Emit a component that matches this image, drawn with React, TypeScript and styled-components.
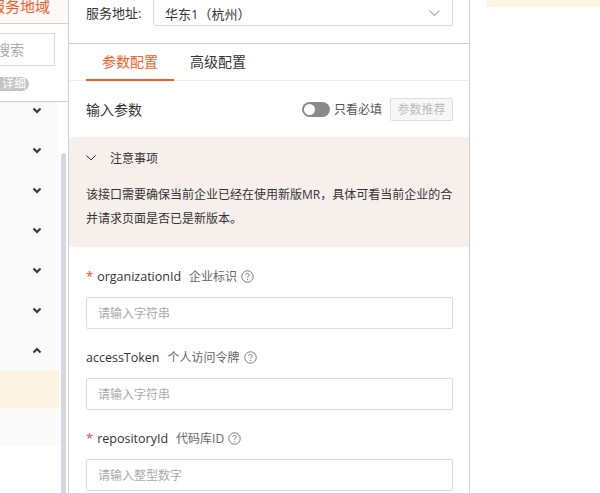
import React from "react";
import styled, { createGlobalStyle } from "styled-components";

const GlobalStyle = createGlobalStyle`
  html, body {
    margin: 0;
    padding: 0;
    width: 600px;
    height: 493px;
    overflow: hidden;
    background: #fff;
    font-family: "Open Sans", "Noto Sans CJK SC", sans-serif;
    color: #333;
  }
  * { box-sizing: border-box; }
`;

interface Field {
  name: string;
  desc: string;
  required: boolean;
  placeholder: string;
}

const fields: Field[] = [
  { name: "organizationId", desc: "企业标识", required: true, placeholder: "请输入字符串" },
  { name: "accessToken", desc: "个人访问令牌", required: false, placeholder: "请输入字符串" },
  { name: "repositoryId", desc: "代码库ID", required: true, placeholder: "请输入整型数字" },
];

const groups = [false, false, false, false, false, false, true];

const Chevron = ({ up }: { up?: boolean }) => (
  <svg width="10" height="7" viewBox="0 0 10 7">
    <path
      d={up ? "M1.5 5.5 L5 2 L8.5 5.5" : "M1.5 1.5 L5 5 L8.5 1.5"}
      fill="none"
      stroke="#333"
      strokeWidth="2"
    />
  </svg>
);

const ThinChevron = ({ color = "#333", size = 10 }: { color?: string; size?: number }) => (
  <svg width={size} height={size * 0.6} viewBox="0 0 10 6">
    <path d="M0.5 0.5 L5 5 L9.5 0.5" fill="none" stroke={color} strokeWidth="1" />
  </svg>
);

const HelpIcon = () => (
  <svg width="13" height="13" viewBox="0 0 12 12">
    <circle cx="6" cy="6" r="5.3" fill="none" stroke="#777" strokeWidth="0.9" />
    <path
      d="M4.4 4.6 C4.4 3.6 5.1 3.1 6 3.1 C6.9 3.1 7.6 3.7 7.6 4.5 C7.6 5.4 6.4 5.6 6.1 6.5 L6.1 7.1"
      fill="none"
      stroke="#777"
      strokeWidth="0.9"
    />
    <circle cx="6.1" cy="8.8" r="0.6" fill="#777" />
  </svg>
);

const App = () => {
  return (
    <>
      <GlobalStyle />
      <Page>
        <LeftPanel>
          <RegionHeader>
            <RegionTitle>服务地域</RegionTitle>
          </RegionHeader>
          <SearchArea>
            <SearchBox>请输入搜索</SearchBox>
            <DetailPill>详细</DetailPill>
          </SearchArea>
          <GroupList>
            <GroupInner>
              {groups.map((open, i) => (
                <GroupRow key={i}>
                  <Chevron up={open} />
                </GroupRow>
              ))}
              <GroupItem $active />
              <GroupItem />
            </GroupInner>
            <ScrollThumb />
          </GroupList>
        </LeftPanel>

        <MiddlePanel>
          <AddressRow>
            <AddressLabel>服务地址:</AddressLabel>
            <Select>
              <span>华东1（杭州）</span>
              <ThinChevron color="#aaa" size={11} />
            </Select>
          </AddressRow>

          <Tabs>
            <Tab $active>参数配置</Tab>
            <Tab>高级配置</Tab>
          </Tabs>

          <ParamsBar>
            <ParamsTitle>输入参数</ParamsTitle>
            <ParamsTools>
              <Toggle />
              <ToggleLabel>只看必填</ToggleLabel>
              <GhostButton disabled>参数推荐</GhostButton>
            </ParamsTools>
          </ParamsBar>

          <Notice>
            <NoticeHeader>
              <ThinChevron color="#333" size={10} />
              <span>注意事项</span>
            </NoticeHeader>
            <NoticeText>
              该接口需要确保当前企业已经在使用新版MR，具体可看当前企业的合
              <br />
              并请求页面是否已是新版本。
            </NoticeText>
          </Notice>

          <FieldList>
            {fields.map((f) => (
              <FieldBlock key={f.name}>
                <FieldLabel>
                  {f.required && <Star>*</Star>}
                  <FieldName>{f.name}</FieldName>
                  <FieldDesc>{f.desc}</FieldDesc>
                  <HelpIcon />
                </FieldLabel>
                <TextInput placeholder={f.placeholder} />
              </FieldBlock>
            ))}
          </FieldList>
        </MiddlePanel>

        <RightPanel>
          <TipStrip />
        </RightPanel>
      </Page>
    </>
  );
};

const Page = styled.div`
  display: flex;
  width: 600px;
  height: 493px;
  overflow: hidden;
`;

const LeftPanel = styled.div`
  width: 69px;
  flex-shrink: 0;
  height: 100%;
  border-right: 1px solid #cfcfcf;
  display: flex;
  flex-direction: column;
  overflow: hidden;
`;

const RegionHeader = styled.div`
  height: 24px;
  flex-shrink: 0;
  background: #fdf9f9;
  border-bottom: 1px solid #cfcfcf;
  display: flex;
  justify-content: flex-end;
  align-items: flex-start;
  padding-right: 18px;
  overflow: hidden;
`;

const RegionTitle = styled.span`
  font-size: 15px;
  line-height: 16px;
  margin-top: -2px;
  color: #ff5a1f;
  white-space: nowrap;
`;

const SearchArea = styled.div`
  height: 78px;
  flex-shrink: 0;
  border-bottom: 1px solid #cfcfcf;
  display: flex;
  flex-direction: column;
  align-items: flex-end;
  padding: 9px 13px 0 0;
`;

const SearchBox = styled.div`
  width: 120px;
  height: 33px;
  border: 1px solid #dcdcdc;
  font-size: 14px;
  line-height: 31px;
  color: #aaa;
  text-align: right;
  padding-right: 30px;
  white-space: nowrap;
  overflow: hidden;
`;

const DetailPill = styled.div`
  margin-top: 11px;
  margin-right: 26px;
  height: 14px;
  padding: 0 3px 0 12px;
  border-radius: 7px;
  background: #c4c4c4;
  color: #fff;
  font-size: 12px;
  line-height: 14px;
  white-space: nowrap;
`;

const GroupList = styled.div`
  flex: 1;
  position: relative;
  overflow: hidden;
`;

const GroupInner = styled.div`
  margin-top: -12px;
  width: 59px;
  background: #fafafa;
`;

const GroupRow = styled.div`
  height: 40px;
  display: flex;
  align-items: center;
  justify-content: flex-end;
  padding-right: 17px;
`;

const GroupItem = styled.div<{ $active?: boolean }>`
  height: 38px;
  background: ${({ $active }) => ($active ? "#fdf3e3" : "#fafafa")};
`;

const ScrollThumb = styled.div`
  position: absolute;
  left: 61px;
  top: 51px;
  width: 5px;
  bottom: -10px;
  border-radius: 3px;
  background: #d4d6e2;
`;

const MiddlePanel = styled.div`
  width: 401px;
  flex-shrink: 0;
  height: 100%;
  border-right: 1px solid #cfcfcf;
  overflow: hidden;
  display: flex;
  flex-direction: column;
`;

const AddressRow = styled.div`
  height: 44px;
  flex-shrink: 0;
  border-bottom: 1px solid #cfcfcf;
  display: flex;
  align-items: flex-start;
  padding: 0 16px 0 17px;
`;

const AddressLabel = styled.span`
  width: 67px;
  font-size: 13px;
  line-height: 20px;
  margin-top: 3px;
  color: #333;
`;

const Select = styled.div`
  flex: 1;
  height: 33px;
  margin-top: -7px;
  border: 1px solid #dcdcdc;
  border-radius: 2px;
  display: flex;
  align-items: center;
  justify-content: space-between;
  padding: 7px 12px 0 11px;
  font-size: 13px;
  color: #333;
`;

const Tabs = styled.div`
  height: 37px;
  flex-shrink: 0;
  display: flex;
  padding-left: 17px;
  border-bottom: 1px solid #eeeeee;
`;

const Tab = styled.div<{ $active?: boolean }>`
  padding: 0 16px;
  font-size: 14px;
  line-height: 36px;
  color: ${({ $active }) => ($active ? "#ff5a1f" : "#333")};
  border-bottom: 2px solid ${({ $active }) => ($active ? "#ff5a1f" : "transparent")};
  margin-bottom: -1px;
`;

const ParamsBar = styled.div`
  height: 56px;
  flex-shrink: 0;
  display: flex;
  align-items: center;
  justify-content: space-between;
  padding: 0 16px 0 17px;
`;

const ParamsTitle = styled.span`
  font-size: 14px;
  color: #333;
`;

const ParamsTools = styled.div`
  display: flex;
  align-items: center;
`;

const Toggle = styled.span`
  position: relative;
  width: 28px;
  height: 15px;
  border-radius: 8px;
  background: #8a8a8a;
  &::after {
    content: "";
    position: absolute;
    left: 2px;
    top: 2px;
    width: 11px;
    height: 11px;
    border-radius: 50%;
    background: #fff;
  }
`;

const ToggleLabel = styled.span`
  margin-left: 4px;
  font-size: 12px;
  color: #555;
`;

const GhostButton = styled.button`
  margin-left: 8px;
  width: 63px;
  height: 23px;
  padding: 0;
  border: 1px solid #dedede;
  border-radius: 2px;
  background: #f7f7f7;
  color: #bbb;
  font-family: inherit;
  font-size: 12px;
`;

const Notice = styled.div`
  flex-shrink: 0;
  height: 110px;
  background: #f6efec;
  padding: 0 16px 0 17px;
`;

const NoticeHeader = styled.div`
  height: 42px;
  display: flex;
  align-items: center;
  gap: 14px;
  font-size: 12px;
  color: #333;
`;

const NoticeText = styled.p`
  margin: 4px 0 0;
  font-size: 12px;
  line-height: 24px;
  color: #333;
  white-space: nowrap;
`;

const FieldList = styled.div`
  display: flex;
  flex-direction: column;
  gap: 18px;
  padding: 19px 16px 0 17px;
`;

const FieldBlock = styled.div`
  display: flex;
  flex-direction: column;
  gap: 11px;
`;

const FieldLabel = styled.div`
  height: 20px;
  display: flex;
  align-items: center;
`;

const Star = styled.span`
  color: #f04134;
  font-size: 13px;
  margin-right: 4px;
`;

const FieldName = styled.span`
  font-size: 12.5px;
  color: #333;
  margin-right: 8px;
`;

const FieldDesc = styled.span`
  font-size: 12px;
  color: #666;
  margin-right: 4px;
`;

const TextInput = styled.input`
  height: 32px;
  width: 100%;
  border: 1px solid #dcdcdc;
  border-radius: 2px;
  padding: 0 11px;
  font-family: inherit;
  font-size: 12px;
  outline: none;
  &::placeholder {
    color: #aaa;
  }
`;

const RightPanel = styled.div`
  flex: 1;
  padding-left: 16px;
`;

const TipStrip = styled.div`
  height: 7px;
  background: #fef5e3;
`;

export default App;
